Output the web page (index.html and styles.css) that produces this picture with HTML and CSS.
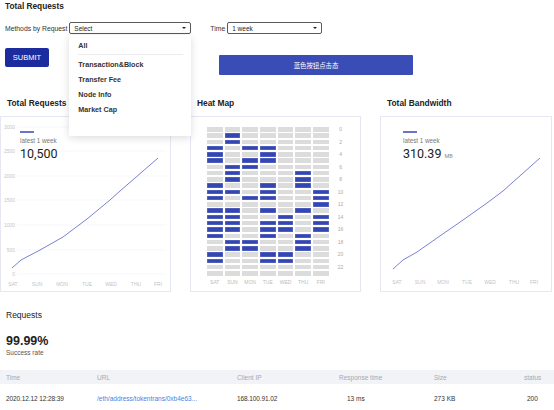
FILE: index.html
```html
<!DOCTYPE html>
<html lang="en">
<head>
  <meta charset="UTF-8">
  <meta name="viewport" content="width=device-width, initial-scale=1.0">
  <title>Total Requests</title>
  <link rel="stylesheet" href="styles.css">
</head>
<body>
  <div class="top">
    <h1 class="page-title">Total Requests</h1>
    <div class="filters">
      <span class="filter-label">Methods by Request</span>
      <div class="select select-method">
        <span>Select</span><i class="caret"></i>
        <ul class="menu">
          <li>All</li>
          <li class="menu-divider"></li>
          <li>Transaction&amp;Block</li>
          <li>Transfer Fee</li>
          <li>Node Info</li>
          <li>Market Cap</li>
        </ul>
      </div>
      <span class="filter-label filter-time">Time</span>
      <div class="select select-time"><span>1 week</span><i class="caret"></i></div>
    </div>
    <div class="actions">
      <button class="btn-submit">SUBMIT</button>
      <button class="btn-blue">蓝色按钮点击态</button>
    </div>
  </div>

  <div class="charts">
    <div class="panel">
      <h2 class="panel-title">Total Requests</h2>
      <div class="card">
        <svg class="chart" width="169" height="174" viewBox="0 0 169 174">
          <g stroke="#f0f1f6" stroke-width="0.6">
            <line x1="16" y1="10" x2="165" y2="10"/>
            <line x1="16" y1="34" x2="165" y2="34"/>
            <line x1="16" y1="59" x2="165" y2="59"/>
            <line x1="16" y1="83" x2="165" y2="83"/>
            <line x1="16" y1="108" x2="165" y2="108"/>
            <line x1="16" y1="133" x2="165" y2="133"/>
            <line x1="16" y1="157" x2="165" y2="157"/>
          </g>
          <g class="axis" text-anchor="end">
            <text x="14" y="12">3000</text>
            <text x="14" y="36">2500</text>
            <text x="14" y="61">2000</text>
            <text x="14" y="85">1500</text>
            <text x="14" y="110">1000</text>
            <text x="14" y="135">500</text>
            <text x="14" y="159">0</text>
          </g>
          <g class="axis" text-anchor="middle">
            <text x="12" y="169">SAT</text>
            <text x="36" y="169">SUN</text>
            <text x="61" y="169">MON</text>
            <text x="86" y="169">TUE</text>
            <text x="110" y="169">WED</text>
            <text x="135" y="169">THU</text>
            <text x="157" y="169">FRI</text>
          </g>
          <polyline fill="none" stroke="#6b73cb" stroke-width="0.9" points="11,151 20,143 39,133 62,120 86,102 109,83 119,74 134,61 157,41"/>
        </svg>
        <div class="legend">
          <div class="legend-line"></div>
          <div class="legend-text">latest 1 week</div>
          <div class="legend-value">10,500</div>
        </div>
      </div>
    </div>

    <div class="panel">
      <h2 class="panel-title">Heat Map</h2>
      <div class="card card-heat">
        <div class="heat-body">
          <div class="heat-grid" id="heatGrid"></div>
          <div class="heat-hours" id="heatHours"></div>
        </div>
        <div class="heat-days">
          <span>SAT</span><span>SUN</span><span>MON</span><span>TUE</span><span>WED</span><span>THU</span><span>FRI</span>
        </div>
      </div>
    </div>

    <div class="panel">
      <h2 class="panel-title">Total Bandwidth</h2>
      <div class="card">
        <svg class="chart" width="170" height="174" viewBox="0 0 170 174">
          <g class="axis" text-anchor="middle">
            <text x="16" y="167">SAT</text>
            <text x="39" y="167">SUN</text>
            <text x="62" y="167">MON</text>
            <text x="86" y="167">TUE</text>
            <text x="109" y="167">WED</text>
            <text x="133" y="167">THU</text>
            <text x="153" y="167">FRI</text>
          </g>
          <polyline fill="none" stroke="#6b73cb" stroke-width="0.9" points="12,152 22,143 36,135 56,121 82,103 106,86 122,74 159,41"/>
        </svg>
        <div class="legend legend-right">
          <div class="legend-line"></div>
          <div class="legend-text">latest 1 week</div>
          <div class="legend-value">310.39 <small>MB</small></div>
        </div>
      </div>
    </div>
  </div>

  <div class="requests">
    <h2 class="section-title">Requests</h2>
    <div class="rate">99.99%</div>
    <div class="rate-label">Success rate</div>
  </div>

  <div class="table">
    <div class="table-head">
      <span>Time</span><span>URL</span><span>Client IP</span><span>Response time</span><span>Size</span><span>status</span>
    </div>
    <div class="table-row">
      <span class="num">2020.12.12 12:28:39</span>
      <span class="link">/eth/address/tokentrans/0xb4e63...</span>
      <span class="num">168.100.91.02</span>
      <span class="cell-rt">13 ms</span>
      <span>273 KB</span>
      <span class="cell-status">200</span>
    </div>
  </div>

  <script>
    const heat = [
      "0000000", "0100000", "0100000", "1011000", "1001000", "1011000",
      "0110000", "0100010", "0100010", "1001010", "1101001", "1011001",
      "0000001", "1101010", "1100101", "1101101", "1101101", "1001010",
      "0110010", "0110010", "1001100", "1001100", "0000000", "0000000"
    ];
    const heatGrid = document.getElementById("heatGrid");
    const heatHours = document.getElementById("heatHours");

    heat.forEach((row, hour) => {
      for (const v of row) {
        const cell = document.createElement("div");
        cell.className = v === "1" ? "cell on" : "cell";
        heatGrid.appendChild(cell);
      }
      const label = document.createElement("span");
      label.textContent = hour % 2 === 0 ? hour : "";
      heatHours.appendChild(label);
    });
  </script>
</body>
</html>
```

FILE: styles.css
```css
body {
  margin: 0;
  background: #fff;
  color: #222;
  font-family: "Liberation Sans", Arial, "Noto Sans CJK SC", sans-serif;
}
.top {
  position: relative;
  z-index: 2;
  padding: 0 5px;
}
.page-title {
  margin: 0;
  font-size: 8.3px;
  line-height: 12px;
  font-weight: bold;
}
.filters {
  display: flex;
  align-items: center;
  height: 12px;
  margin-top: 10px;
}
.filter-label {
  margin-right: 2px;
  font-size: 6.8px;
  color: #333;
}
.filter-time {
  margin-left: 19px;
}
.select {
  position: relative;
  box-sizing: border-box;
  display: flex;
  align-items: center;
  height: 12px;
  padding-left: 4px;
  border: 1px solid #5a5a5a;
  border-radius: 2px;
  font-size: 6.5px;
}
.select-method { width: 122px; }
.select-time { width: 95px; }
.caret {
  width: 0;
  height: 0;
  margin-left: auto;
  margin-right: 4px;
  border-left: 2px solid transparent;
  border-right: 2px solid transparent;
  border-top: 2.5px solid #222;
}
.menu {
  position: absolute;
  left: -1px;
  top: 12px;
  box-sizing: border-box;
  width: 122px;
  height: 101px;
  margin: 0;
  padding: 2.5px 0 0;
  list-style: none;
  background: #fff;
  box-shadow: 0 2px 8px rgba(0, 0, 0, 0.14);
}
.menu li {
  padding-left: 9px;
  font-size: 7.2px;
  font-weight: bold;
  line-height: 15px;
  color: #333;
}
.menu .menu-divider {
  height: 1px;
  margin: 1.5px 8px 1.5px 9px;
  padding: 0;
  background: #ececec;
}
.actions {
  display: flex;
  align-items: flex-start;
  margin-top: 14px;
}
.btn-submit {
  width: 44px;
  height: 19px;
  padding: 0;
  border: none;
  border-radius: 2px;
  background: #1c2c9f;
  color: #fff;
  font-family: "Liberation Sans", Arial, sans-serif;
  font-size: 7.5px;
}
.btn-blue {
  width: 194px;
  height: 20px;
  margin: 7px 0 0 170px;
  padding: 0;
  border: none;
  border-radius: 1px;
  background: #3a4cb6;
  color: #fff;
  font-family: "Noto Sans CJK SC", sans-serif;
  font-size: 6.4px;
}

.charts {
  display: grid;
  grid-template-columns: 171px 171px 172px;
  column-gap: 19px;
  margin-top: 22px;
}
.panel-title {
  margin: 0 0 7px;
  padding-left: 7px;
  font-size: 8.4px;
  line-height: 12px;
  font-weight: bold;
}
.card {
  position: relative;
  box-sizing: border-box;
  height: 176px;
  border: 1px solid #e6e7f4;
}
.chart {
  display: block;
}
.axis {
  font-size: 5px;
  fill: #c4c4c8;
}
.legend {
  position: absolute;
  left: 19px;
  top: 14px;
}
.legend-right {
  left: 22px;
}
.legend-line {
  width: 14px;
  height: 2px;
  background: #6b73cb;
}
.legend-text {
  margin-top: 4px;
  font-size: 6.3px;
  line-height: 8px;
  color: #777;
}
.legend-value {
  margin-top: 2px;
  font-family: Roboto, sans-serif;
  font-size: 12.5px;
  line-height: 14px;
  color: #222;
}
.legend-value small {
  font-size: 5.5px;
  color: #888;
}

.card-heat {
  padding: 10px 0 0 16px;
}
.heat-body {
  display: flex;
}
.heat-grid {
  display: grid;
  grid-template-columns: repeat(7, 15.5px);
  grid-template-rows: repeat(24, 4.5px);
  gap: 1.77px 2.2px;
}
.cell {
  background: #dcdcdc;
}
.cell.on {
  background: #3446b2;
  box-shadow: inset 0 0 0 0.5px #6877c9;
}
.heat-hours {
  display: grid;
  grid-template-rows: repeat(24, 4.5px);
  row-gap: 1.77px;
  width: 8px;
  margin-left: 8px;
  font-size: 5px;
  line-height: 4.5px;
  text-align: center;
  color: #aaa;
}
.heat-days {
  display: grid;
  grid-template-columns: repeat(7, 15.5px);
  column-gap: 2.2px;
  margin-top: 3px;
  font-size: 5px;
  line-height: 6px;
  text-align: center;
  color: #bbb;
}

.requests {
  margin-top: 17px;
  padding: 0 6px;
}
.section-title {
  margin: 0;
  font-size: 8.5px;
  line-height: 12px;
  font-weight: normal;
}
.rate {
  margin-top: 13px;
  font-size: 12.5px;
  line-height: 14px;
  font-weight: bold;
}
.rate-label {
  margin-top: 1px;
  font-size: 6.5px;
  line-height: 8px;
  color: #555;
}

.table {
  margin-top: 13px;
}
.table-head,
.table-row {
  display: grid;
  grid-template-columns: 91px 140px 102px 95px 90px 1fr;
  align-items: center;
}
.table-head span,
.table-row span {
  padding-left: 6px;
  white-space: nowrap;
}
.table-head {
  height: 14px;
  background: #f2f3f7;
  font-size: 6.5px;
  color: #a8a8ae;
}
.table-row {
  height: 28px;
  font-size: 6.5px;
  color: #333;
}
.table-row .num {
  letter-spacing: -0.1px;
}
.table-row .link {
  color: #4a7fe0;
}
.table-row .cell-rt {
  padding-left: 14px;
}
.table-row .cell-status {
  padding-left: 9px;
}
```
